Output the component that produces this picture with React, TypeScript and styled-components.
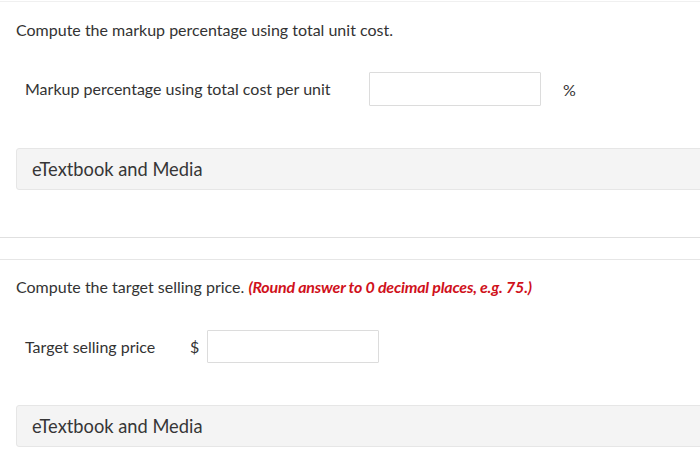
import React from 'react';
import styled, { createGlobalStyle } from 'styled-components';

const GlobalStyle = createGlobalStyle`
  html, body {
    margin: 0;
    padding: 0;
    background: #ffffff;
    overflow: hidden;
  }
  body {
    font-family: Lato, "Open Sans", Arial, sans-serif;
    color: #333333;
  }
`;

const Page = styled.div`
  width: 700px;
  height: 465px;
  overflow: hidden;
  display: flex;
  flex-direction: column;
  gap: 21px;
`;

const Card = styled.section<{ $first?: boolean }>`
  border-top: 1px solid ${p => (p.$first ? '#f0f0f0' : '#e6e6e6')};
  border-bottom: 1px solid #e0e0e0;
  margin-top: ${p => (p.$first ? '1px' : '0')};
  padding: ${p => (p.$first ? '18px' : '17px')} 0 47px 16px;
  font-size: 16px;
`;

const Question = styled.p`
  margin: 0;
  line-height: 20px;
`;

const Hint = styled.span`
  color: #d0111b;
  font-weight: 700;
  font-style: italic;
  letter-spacing: -0.2px;
`;

const Row = styled.div<{ $top: number }>`
  display: flex;
  align-items: center;
  margin-top: ${p => p.$top}px;
  padding-left: 9px;
`;

const Label = styled.span<{ $width: number }>`
  width: ${p => p.$width}px;
  line-height: 20px;
  flex-shrink: 0;
`;

const Unit = styled.span<{ $left: number; $right: number }>`
  margin: 0 ${p => p.$right}px 0 ${p => p.$left}px;
`;

const Input = styled.input<{ $height: number }>`
  width: 172px;
  height: ${p => p.$height}px;
  box-sizing: border-box;
  border: 1px solid #dcdcdc;
  border-radius: 1px;
  background: #ffffff;
  padding: 0 8px;
  font: inherit;
  outline: none;
`;

const Media = styled.div`
  margin-top: 42px;
  margin-right: -12px;
  height: 42px;
  box-sizing: border-box;
  background: #f4f4f4;
  border: 1px solid #e6e6e6;
  border-radius: 3px;
  display: flex;
  align-items: center;
  padding-left: 15px;
  font-size: 18.3px;
  color: #363636;
`;

export default function App() {
  return (
    <>
      <GlobalStyle />
      <Page>
        <Card $first>
          <Question>Compute the markup percentage using total unit cost.</Question>
          <Row $top={32}>
            <Label $width={344}>Markup percentage using total cost per unit</Label>
            <Input $height={34} />
            <Unit $left={22} $right={0}>%</Unit>
          </Row>
          <Media>eTextbook and Media</Media>
        </Card>
        <Card>
          <Question>
            Compute the target selling price. <Hint>(Round answer to 0 decimal places, e.g. 75.)</Hint>
          </Question>
          <Row $top={33}>
            <Label $width={165}>Target selling price</Label>
            <Unit $left={0} $right={8}>$</Unit>
            <Input $height={33} />
          </Row>
          <Media>eTextbook and Media</Media>
        </Card>
      </Page>
    </>
  );
}
